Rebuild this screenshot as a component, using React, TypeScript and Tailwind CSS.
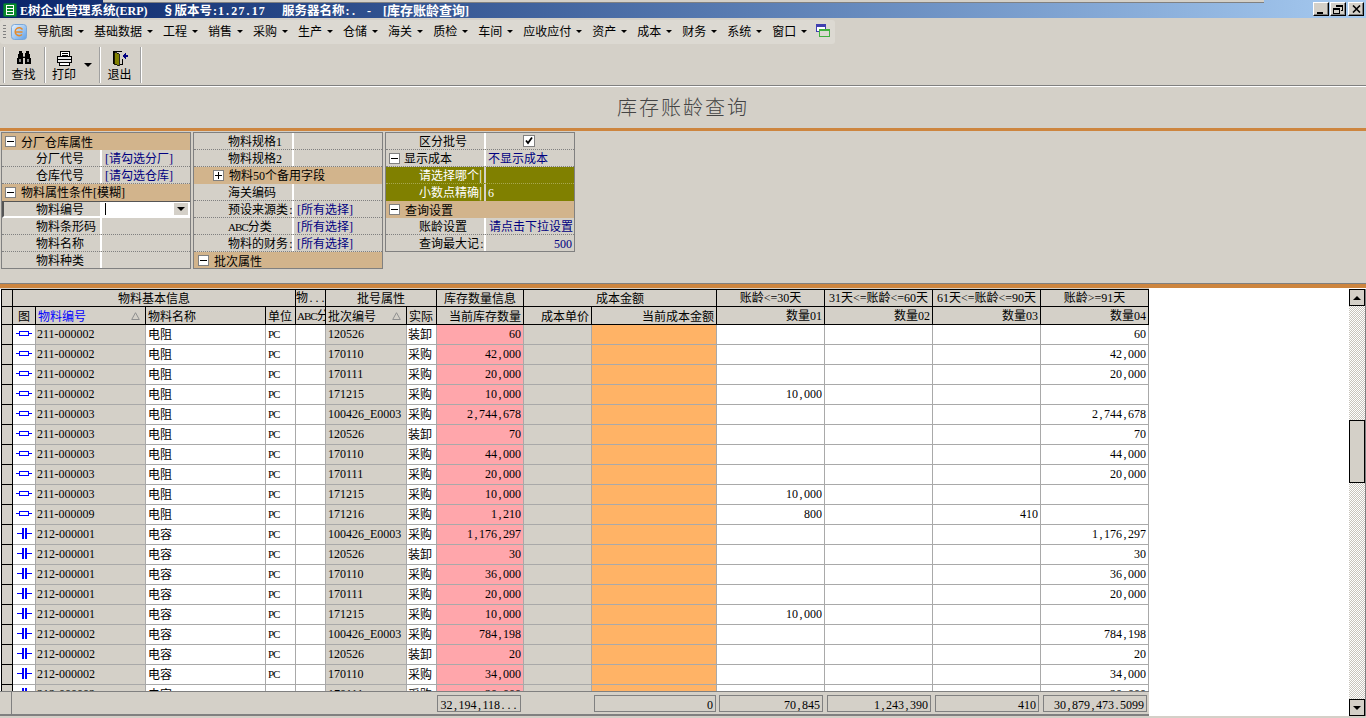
import React from 'react';

const FONT = '[font-family:"Noto_Sans_CJK_SC","Liberation_Sans",sans-serif]';

// Latin runs use a serif with half-width digits; punctuation gets a fixed cell, as in the old bitmap font
function T({ s, bold, wide, narrow }: { s: string; bold?: boolean; wide?: boolean; narrow?: boolean }) {
  const parts = s.split(/([\x00-\x7f]+)/).filter(Boolean);
  return (
    <>
      {parts.map((p, i) =>
        /^[\x00-\x7f]/.test(p) ? (
          <span key={i} className={`[font-family:"Liberation_Serif",serif] whitespace-pre ${narrow ? 'text-[11px] tracking-[-1px]' : 'text-[12px]'} ${bold ? 'font-bold' : ''} ${wide ? 'tracking-[1.2px]' : ''}`}>
            {p.split(/([,.:])/).map((q, j) =>
              /^[,.:]$/.test(q) ? (
                <span key={j} className="inline-block w-[6px] text-center">{q}</span>
              ) : (
                q
              ),
            )}
          </span>
        ) : (
          <span key={i} className={bold ? 'font-bold' : ''}>{p}</span>
        ),
      )}
    </>
  );
}

const menus = ['导航图', '基础数据', '工程', '销售', '采购', '生产', '仓储', '海关', '质检', '车间', '应收应付', '资产', '成本', '财务', '系统', '窗口'];

function Caret({ className = '' }: { className?: string }) {
  return <span className={`inline-block w-0 h-0 border-x-[3px] border-x-transparent border-t-[3px] border-t-black ${className}`} />;
}

function WinButton({ children }: { children: React.ReactNode }) {
  return (
    <div className="w-[16px] h-[14px] bg-[#d4d0c8] border-t border-l border-t-white border-l-white border-r border-b border-r-black border-b-black shadow-[inset_-1px_-1px_0_#808080] flex items-center justify-center">
      {children}
    </div>
  );
}

function TitleBar() {
  return (
    <div className="relative h-[18px] bg-gradient-to-r from-[#0a246a] to-[#a6caf0] flex items-center pl-[3px] pt-[2px] shrink-0">
      <div className="absolute left-[103px] top-0 w-[1161px] h-[3px] bg-[#d4d0c8] border-b border-[#808080]" />
      <svg width="14" height="14" viewBox="0 0 14 14" className="shrink-0">
        <rect x="0.5" y="0.5" width="13" height="13" rx="1" fill="#0a8a2a" stroke="#064" />
        <rect x="3.5" y="2.5" width="7" height="9" fill="#0a8a2a" stroke="#fff" />
        <path d="M3 5.5h8M3 8.5h8" stroke="#fff" />
      </svg>
      <div className="ml-[3px] text-white text-[12.5px] whitespace-pre flex items-center leading-[14px]">
        <span className="w-[142px]"><T bold s="E树企业管理系统(ERP)" /></span>
        <span className="w-[120px]"><T bold s="§版本号:" /><T bold wide s="1.27.17" /></span>
        <span className="w-[85px]"><T bold s="服务器名称:." /></span>
        <span className="text-[13px]"><T bold s="-    [库存账龄查询]" /></span>
      </div>
      <div className="absolute right-[2px] top-[2px] flex gap-[1px]">
        <WinButton><div className="w-[6px] h-[2px] bg-black mt-[7px] mr-[2px]" /></WinButton>
        <WinButton>
          <svg width="10" height="9" viewBox="0 0 10 9" fill="none" stroke="#000" shapeRendering="crispEdges">
            <path d="M3 2V0.5h6.5V5.5H8M3 1.5h6" />
            <rect x="0.5" y="3.5" width="6" height="5" fill="#d4d0c8" />
            <path d="M0.5 4.5h6" />
          </svg>
        </WinButton>
        <div className="ml-[1px]">
          <WinButton>
            <svg width="9" height="8" viewBox="0 0 9 8" stroke="#000" strokeWidth="1.6"><path d="M1 0.5l7 7M8 0.5l-7 7" /></svg>
          </WinButton>
        </div>
      </div>
    </div>
  );
}

function MenuBar() {
  return (
    <div className="h-[27px] shrink-0 pt-[2px]">
      <div className="w-[835px] h-[24px] bg-[#dcd9d2] rounded-[3px] flex items-center pl-[3px] text-[12px] text-black">
        <div className="w-[3px] h-[14px] bg-[repeating-linear-gradient(#808080_0_1px,transparent_1px_3px)] shrink-0" />
        <svg width="16" height="16" viewBox="0 0 16 16" className="ml-[5px] mr-[10px] shrink-0">
          <defs>
            <linearGradient id="ie" x1="0" y1="0" x2="1" y2="1">
              <stop offset="0" stopColor="#e8f4ff" />
              <stop offset="1" stopColor="#5f9fe6" />
            </linearGradient>
          </defs>
          <rect x="0.5" y="0.5" width="15" height="15" rx="3" fill="url(#ie)" stroke="#7aa7d8" />
          <path d="M11.5 5.5A4 4 0 1 0 11 10.5M4.5 8h7" fill="none" stroke="#e58a2a" strokeWidth="1.4" />
        </svg>
        {menus.map((m) => (
          <div key={m} className="flex items-center mr-[10px] shrink-0 leading-[16px] pb-[2px]">
            <span>{m}</span>
            <Caret className="ml-[5px]" />
          </div>
        ))}
        <svg width="14" height="13" viewBox="0 0 14 13" className="-ml-[1px] mb-[3px] shrink-0" shapeRendering="crispEdges">
          <rect x="0.5" y="0.5" width="9" height="7" fill="#fff" stroke="#4040b0" />
          <rect x="0" y="0" width="10" height="3" fill="#4040b0" />
          <rect x="3.5" y="5.5" width="10" height="7" fill="#dcd9d2" stroke="#40b040" />
          <rect x="3" y="5" width="11" height="2" fill="#40b040" />
        </svg>
      </div>
    </div>
  );
}

function ToolSep() {
  return <div className="w-[2px] h-[36px] bg-white border-l border-[#a0a0a0] shrink-0" />;
}

function ToolBtn({ label, width, icon }: { label: string; width: string; icon: React.ReactNode }) {
  return (
    <div className={`${width} h-[36px] pr-[2px] flex flex-col items-center text-[12px] leading-[14px] text-black`}>
      <div className="h-[20px] pt-[4px] flex items-start justify-center">{icon}</div>
      <span>{label}</span>
    </div>
  );
}

function ToolBar() {
  return (
    <div className="h-[40px] shrink-0 flex items-start pl-[3px] pt-[2px] gap-0">
      <ToolSep />
      <ToolBtn
        label="查找"
        width="w-[39px]"
        icon={
          <svg width="16" height="14" viewBox="0 0 16 14" shapeRendering="crispEdges">
            <path d="M3 0h3v2h1v3h2V2h1V0h3v3h1v4h1v6h-6V7H7v6H1V7h1V3h1z" fill="#000" />
            <path d="M3 8h2v3H3zM11 8h2v3h-2z" fill="#888" />
            <path d="M7 5h2v1H7z" fill="#888" />
          </svg>
        }
      />
      <ToolSep />
      <div className="w-[53px] h-[36px] relative">
        <ToolBtn
          label="打印"
          width="w-[38px]"
          icon={
            <svg width="17" height="15" viewBox="0 0 17 15" fill="#fff" stroke="#000" shapeRendering="crispEdges">
              <path d="M4.5 0.5h9v5h-9z" />
              <path d="M6 2.5h6M6 4h6" />
              <path d="M1.5 5.5h14v6h-14z" fill="#e8e8e8" />
              <path d="M1.5 8.5h14" />
              <path d="M3.5 11.5h10v3h-10z" />
            </svg>
          }
        />
        <Caret className="absolute left-[38px] top-[16px] border-x-[4px] border-t-[4px]" />
      </div>
      <ToolSep />
      <ToolBtn
        label="退出"
        width="w-[39px]"
        icon={
          <svg width="16" height="16" viewBox="0 0 16 16" shapeRendering="crispEdges">
            <path d="M1 0h9v1H3v12H1z" fill="#000" />
            <path d="M2 1l5 2v12l-5-2z" fill="#808000" stroke="#000" strokeWidth="0.8" />
            <path d="M8 13h2V8h1v6H8z" fill="#000" />
            <path d="M10 5l4-3v2h2v2h-2v2z" fill="#000080" />
          </svg>
        }
      />
      <ToolSep />
    </div>
  );
}

function Expander({ sign }: { sign: '+' | '-' }) {
  return (
    <span className="relative inline-block w-[11px] h-[11px] bg-white border border-[#808080] shrink-0">
      <span className="absolute left-[1px] top-[4px] w-[7px] h-px bg-black" />
      {sign === '+' && <span className="absolute left-[4px] top-[1px] w-px h-[7px] bg-black" />}
    </span>
  );
}

function GroupRow({ label, sign = '-', indent = 'pl-[3px]' }: { label: string; sign?: '+' | '-'; indent?: string }) {
  return (
    <div className={`h-[17px] bg-[#d2b48c] flex items-center gap-[5px] ${indent} whitespace-nowrap overflow-hidden`}>
      <Expander sign={sign} />
      <span className="leading-[15px] pb-px"><T s={label} /></span>
    </div>
  );
}

function PropRow({ label, value, pad = 'pl-[34px]', narrow, children }: { label: string; value?: string; pad?: string; narrow?: boolean; children?: React.ReactNode }) {
  return (
    <div className="h-[17px] flex border-b border-dotted border-[#808080]">
      <div className={`w-[100px] ${pad} border-r-2 border-white whitespace-nowrap overflow-hidden leading-[16px] shrink-0`}>
        <T s={label} narrow={narrow} />
      </div>
      <div className="flex-1 pl-[3px] leading-[16px] text-[#000080] whitespace-nowrap overflow-hidden">
        {value && <T s={value} />}
        {children}
      </div>
    </div>
  );
}

function Panel({ children, rows }: { children: React.ReactNode; rows: string }) {
  return <div className={`w-[190px] ${rows} border border-[#808080] text-[12px] text-black shrink-0 overflow-hidden`}>{children}</div>;
}

function QueryPanel() {
  return (
    <div className="h-[152px] shrink-0 flex gap-[2px] pl-px border-b border-[#808080]">
      <Panel rows="h-[137px]">
        <GroupRow label="分厂仓库属性" />
        <PropRow label="分厂代号" value="[请勾选分厂]" />
        <PropRow label="仓库代号" value="[请勾选仓库]" />
        <GroupRow label="物料属性条件[模糊]" />
        <div className="h-[17px] flex border-t border-l-2 border-[#555] border-b-2 border-b-white">
          <div className="w-[98px] pl-[32px] border-r-2 border-white whitespace-nowrap leading-[14px] shrink-0"><T s="物料编号" /></div>
          <div className="flex-1 bg-white flex items-center pl-[3px] pr-[2px] justify-between">
            <span className="w-px h-[12px] bg-black" />
            <span className="w-[14px] h-[12px] bg-[#d4d0c8] flex items-center justify-center">
              <Caret className="border-x-[4px] border-t-[4px]" />
            </span>
          </div>
        </div>
        <PropRow label="物料条形码" />
        <PropRow label="物料名称" />
        <PropRow label="物料种类" />
      </Panel>
      <Panel rows="h-[137px]">
        <PropRow label="物料规格1" />
        <PropRow label="物料规格2" />
        <GroupRow label="物料50个备用字段" sign="+" indent="pl-[19px]" />
        <PropRow label="海关编码" />
        <PropRow label="预设来源类:" value="[所有选择]" />
        <PropRow label="ABC分类" narrow value="[所有选择]" />
        <PropRow label="物料的财务:" value="[所有选择]" />
        <GroupRow label="批次属性" indent="pl-[4px]" />
      </Panel>
      <Panel rows="h-[120px]">
        <PropRow label="区分批号" pad="pl-[33px]">
          <span className="flex justify-center items-center h-full pr-[6px]">
            <svg width="12" height="12" viewBox="0 0 10 10" className="bg-white border border-[#808080]">
              <path d="M2 4.5l2 2.5L8 1.5" fill="none" stroke="#000" strokeWidth="1.8" />
            </svg>
          </span>
        </PropRow>
        <div className="h-[17px] flex border-b border-dotted border-[#808080]">
          <div className="w-[100px] pl-[3px] border-r-2 border-white flex items-center gap-[4px] shrink-0">
            <Expander sign="-" />
            <span>显示成本</span>
          </div>
          <div className="flex-1 pl-[2px] leading-[16px] text-[#000080]">不显示成本</div>
        </div>
        <div className="h-[17px] flex bg-[#808000] text-white border-b border-dotted border-[#a8a850]">
          <div className="w-[100px] pl-[33px] border-r-2 border-[#d4d0c8] whitespace-nowrap overflow-hidden leading-[16px] shrink-0">请选择哪个|</div>
        </div>
        <div className="h-[17px] flex bg-[#808000] text-white">
          <div className="w-[100px] pl-[33px] border-r-2 border-[#d4d0c8] whitespace-nowrap overflow-hidden leading-[16px] shrink-0">小数点精确|</div>
          <div className="pl-[2px] leading-[16px]"><T s="6" /></div>
        </div>
        <GroupRow label="查询设置" />
        <PropRow label="账龄设置" pad="pl-[33px]" value="请点击下拉设置" />
        <div className="h-[17px] flex">
          <div className="w-[100px] pl-[33px] border-r-2 border-white whitespace-nowrap overflow-hidden leading-[16px] shrink-0"><T s="查询最大记:" /></div>
          <div className="flex-1 pr-[2px] text-right leading-[16px] text-[#000080]"><T s="500" /></div>
        </div>
      </Panel>
    </div>
  );
}

type Row = { code: string; batch: string; src: string; qty: string; d1?: string; d3?: string; d4?: string };

const rows: Row[] = [
  { code: '211-000002', batch: '120526', src: '装卸', qty: '60', d4: '60' },
  { code: '211-000002', batch: '170110', src: '采购', qty: '42,000', d4: '42,000' },
  { code: '211-000002', batch: '170111', src: '采购', qty: '20,000', d4: '20,000' },
  { code: '211-000002', batch: '171215', src: '采购', qty: '10,000', d1: '10,000' },
  { code: '211-000003', batch: '100426_E0003', src: '采购', qty: '2,744,678', d4: '2,744,678' },
  { code: '211-000003', batch: '120526', src: '装卸', qty: '70', d4: '70' },
  { code: '211-000003', batch: '170110', src: '采购', qty: '44,000', d4: '44,000' },
  { code: '211-000003', batch: '170111', src: '采购', qty: '20,000', d4: '20,000' },
  { code: '211-000003', batch: '171215', src: '采购', qty: '10,000', d1: '10,000' },
  { code: '211-000009', batch: '171216', src: '采购', qty: '1,210', d1: '800', d3: '410' },
  { code: '212-000001', batch: '100426_E0003', src: '采购', qty: '1,176,297', d4: '1,176,297' },
  { code: '212-000001', batch: '120526', src: '装卸', qty: '30', d4: '30' },
  { code: '212-000001', batch: '170110', src: '采购', qty: '36,000', d4: '36,000' },
  { code: '212-000001', batch: '170111', src: '采购', qty: '20,000', d4: '20,000' },
  { code: '212-000001', batch: '171215', src: '采购', qty: '10,000', d1: '10,000' },
  { code: '212-000002', batch: '100426_E0003', src: '采购', qty: '784,198', d4: '784,198' },
  { code: '212-000002', batch: '120526', src: '装卸', qty: '20', d4: '20' },
  { code: '212-000002', batch: '170110', src: '采购', qty: '34,000', d4: '34,000' },
  { code: '212-000002', batch: '170111', src: '采购', qty: '20,000', d4: '20,000' },
];

const colWidths = [12, 23, 110, 120, 30, 30, 81, 30, 87, 68, 125, 108, 108, 108, 108];

const groupHead: [string, number][] = [
  ['物料基本信息', 4],
  ['物...', 1],
  ['批号属性', 2],
  ['库存数量信息', 1],
  ['成本金额', 2],
  ['账龄<=30天', 1],
  ['31天<=账龄<=60天', 1],
  ['61天<=账龄<=90天', 1],
  ['账龄>=91天', 1],
];

const hd = 'bg-[#d4d0c8] border-r border-b border-black p-0 font-normal whitespace-nowrap overflow-hidden';
// pb-[2px] lifts the text one pixel inside the 20px row
const td = 'border-r border-b border-[#a9a9a9] p-0 pb-[2px] overflow-hidden whitespace-nowrap';

function SortMark() {
  return (
    <svg width="9" height="8" viewBox="0 0 9 8" className="absolute right-[5px] top-[5px]">
      <path d="M4.5 0.7L8.3 7.5H0.7z" fill="none" stroke="#909090" />
    </svg>
  );
}

function PartIcon({ code }: { code: string }) {
  if (code.startsWith('211')) {
    return (
      <svg width="16" height="7" viewBox="0 0 16 7" className="block mx-auto" shapeRendering="crispEdges">
        <rect x="3.5" y="1.5" width="9" height="4" fill="#fff" stroke="#0000ff" />
        <path d="M0 3.5h3M13 3.5h3" stroke="#0000ff" />
      </svg>
    );
  }
  return (
    <svg width="15" height="11" viewBox="0 0 15 11" className="block mx-auto" shapeRendering="crispEdges">
      <path d="M0 5.5h5M10 5.5h5" stroke="#0000ff" />
      <rect x="5" y="0" width="2" height="11" fill="#0000ff" />
      <rect x="8" y="0" width="2" height="11" fill="#0000ff" />
    </svg>
  );
}

function DataGrid() {
  const num = 'text-right pr-[2px]';
  return (
    <div className="flex-1 min-w-0 flex flex-col bg-white overflow-hidden">
      <div className="h-[403px] shrink-0 overflow-hidden">
        <div className="h-px w-[1149px] bg-[#d4d0c8]" />
        <div className="pl-px">
          <table className="table-fixed border-separate border-spacing-0 text-[12px] text-black w-[1148px] leading-[14px]">
            <colgroup>
              {colWidths.map((w, i) => (
                <col key={i} style={{ width: w }} />
              ))}
            </colgroup>
            <thead>
              <tr className="h-[18px]">
                <th className={`${hd} border-t border-l`} />
                {groupHead.map(([t, span]) => (
                  <th key={t} colSpan={span} className={`${hd} border-t text-center pb-px`}>
                    <T s={t} />
                  </th>
                ))}
              </tr>
              <tr className="h-[18px]">
                <th className={`${hd} border-l`} />
                <th className={`${hd} text-center`}>图</th>
                <th className={`${hd} text-left pl-[2px] relative text-[#0000ff]`}>物料编号<SortMark /></th>
                <th className={`${hd} text-left pl-[2px]`}>物料名称</th>
                <th className={`${hd} text-left pl-[2px]`}>单位</th>
                <th className={`${hd} text-left pl-px`}><T s="ABC分" narrow /></th>
                <th className={`${hd} text-left pl-[2px] relative`}>批次编号<SortMark /></th>
                <th className={`${hd} text-left pl-[2px]`}>实际</th>
                <th className={`${hd} ${num}`}>当前库存数量</th>
                <th className={`${hd} ${num}`}>成本单价</th>
                <th className={`${hd} ${num}`}>当前成本金额</th>
                <th className={`${hd} ${num}`}><T s="数量01" /></th>
                <th className={`${hd} ${num}`}><T s="数量02" /></th>
                <th className={`${hd} ${num}`}><T s="数量03" /></th>
                <th className={`${hd} ${num}`}><T s="数量04" /></th>
              </tr>
            </thead>
            <tbody>
              {rows.map((r, i) => (
                <tr key={i} className="h-[20px]">
                  <td className="bg-[#d4d0c8] border-l border-r border-b border-black p-0" />
                  <td className={td}><PartIcon code={r.code} /></td>
                  <td className={`${td} bg-[#d4d0c8] pl-px`}><T s={r.code} /></td>
                  <td className={`${td} pl-[2px]`}>{r.code.startsWith('211') ? '电阻' : '电容'}</td>
                  <td className={`${td} pl-[2px]`}><T s="PC" narrow /></td>
                  <td className={td} />
                  <td className={`${td} bg-[#d4d0c8] pl-[2px]`}><T s={r.batch} /></td>
                  <td className={`${td} pl-px`}>{r.src}</td>
                  <td className={`${td} bg-[#ffa6ab] ${num}`}><T s={r.qty} /></td>
                  <td className={`${td} bg-[#d4d0c8]`} />
                  <td className={`${td} bg-[#ffb366]`} />
                  <td className={`${td} ${num}`}>{r.d1 && <T s={r.d1} />}</td>
                  <td className={td} />
                  <td className={`${td} ${num}`}>{r.d3 && <T s={r.d3} />}</td>
                  <td className={`${td} ${num}`}>{r.d4 && <T s={r.d4} />}</td>
                </tr>
              ))}
            </tbody>
          </table>
        </div>
      </div>
      <GridFooter />
    </div>
  );
}

function SumBox({ width, text, gap }: { width: string; text?: string; gap: string }) {
  return (
    <div className={`${width} ${gap} h-[17px] border border-[#808080] text-right pr-[2px] leading-[15px] overflow-hidden shrink-0 whitespace-nowrap`}>
      {text && <T s={text} />}
    </div>
  );
}

function GridFooter() {
  return (
    <div className="w-[1149px] h-[25px] bg-[#d4d0c8] border-t border-[#808080] border-b-2 border-b-[#808080] flex items-center text-[12px] text-black shrink-0">
      <div className="w-[12px] h-full border-r border-[#808080] shrink-0" />
      <SumBox width="w-[84px]" gap="ml-[425px]" text="32,194,118..." />
      <SumBox width="w-[122px]" gap="ml-[73px]" text="0" />
      <SumBox width="w-[104px]" gap="ml-[3px]" text="70,845" />
      <SumBox width="w-[104px]" gap="ml-[4px]" text="1,243,390" />
      <SumBox width="w-[104px]" gap="ml-[4px]" text="410" />
      <SumBox width="w-[104px]" gap="ml-[4px]" text="30,879,473.5099" />
    </div>
  );
}

function ScrollBtn({ up }: { up?: boolean }) {
  return (
    <div className="w-[16px] h-[17px] bg-[#d4d0c8] border border-black flex items-center justify-center shrink-0">
      <span className={`w-0 h-0 border-x-[4px] border-x-transparent ${up ? 'border-b-[4px] border-b-black' : 'border-t-[4px] border-t-black'}`} />
    </div>
  );
}

function ScrollBar() {
  return (
    <div className="w-[17px] h-[427px] mt-px shrink-0 border-r border-[#808080] flex flex-col bg-[repeating-conic-gradient(#c8c4bc_0_25%,#ffffff_0_50%)] bg-[length:2px_2px]">
      <ScrollBtn up />
      <div className="h-[114px] shrink-0" />
      <div className="h-[63px] bg-[#d4d0c8] border border-black shrink-0" />
      <div className="flex-1" />
      <ScrollBtn />
    </div>
  );
}

export default function App() {
  return (
    <div className={`w-[1366px] h-[718px] overflow-hidden bg-[#d4d0c8] flex flex-col ${FONT}`}>
      <TitleBar />
      <MenuBar />
      <ToolBar />
      <div className="h-[2px] bg-white border-t border-[#808080] shrink-0" />
      <div className="h-[41px] shrink-0 flex items-center justify-center pb-[2px] text-[20px] tracking-[2px] text-[#444] font-light">
        库存账龄查询
      </div>
      <div className="h-[3px] bg-[#cd853f] shrink-0" />
      <div className="h-px shrink-0" />
      <QueryPanel />
      <div className="h-[4px] bg-[#cd853f] shrink-0" />
      <div className="flex h-[428px] shrink-0 bg-white">
        <DataGrid />
        <ScrollBar />
      </div>
    </div>
  );
}
